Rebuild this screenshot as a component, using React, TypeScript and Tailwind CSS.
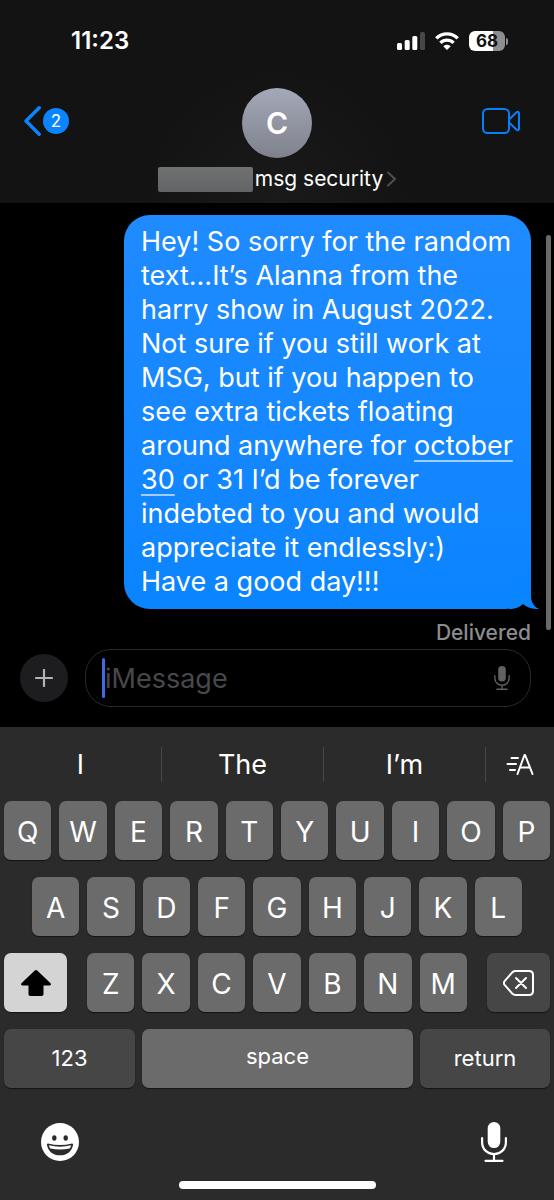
import React from "react";

const ROW_ONE = ["Q", "W", "E", "R", "T", "Y", "U", "I", "O", "P"];
const ROW_TWO = ["A", "S", "D", "F", "G", "H", "J", "K", "L"];
const ROW_THREE = ["Z", "X", "C", "V", "B", "N", "M"];

const KEY =
  "flex h-[59px] min-w-0 items-center justify-center rounded-[7px] shadow-[0_1px_1px_#151515]";

function SignalIcon() {
  return (
    <svg width="28" height="18" viewBox="0 0 28 18" fill="#fff" aria-hidden="true">
      <rect x="0" y="11" width="5" height="7" rx="1.5" />
      <rect x="7.7" y="8" width="5" height="10" rx="1.5" />
      <rect x="15.3" y="4" width="5" height="14" rx="1.5" />
      <rect x="23" y="0" width="5" height="18" rx="1.5" fill="#474747" />
    </svg>
  );
}

function WifiIcon() {
  return (
    <svg width="24" height="18" viewBox="0 0 24 18" fill="none" stroke="#fff" strokeWidth="3.4" aria-hidden="true">
      <path d="M1.3 6.4C7.3.3 16.7.3 22.7 6.4" />
      <path d="M5.400 10.900C9.200 7.200 14.800 7.200 18.600 10.900" />
      <path d="M12 18l-3.700-3.700c2.100-2 5.300-2 7.400 0z" fill="#fff" stroke="none" />
    </svg>
  );
}

function MicIcon({ className }: { className: string }) {
  return (
    <svg
      className={className}
      viewBox="0 0 26 40"
      fill="none"
      stroke="currentColor"
      strokeWidth="2.2"
      strokeLinecap="round"
      aria-hidden="true"
    >
      <rect x="6.700" y="0" width="12.600" height="26" rx="6.300" fill="currentColor" stroke="none" />
      <path d="M1.1 16v4.2C1.1 27 6.1 32 13 32s11.9-5 11.9-11.8V16M13 32v6.6M4.5 38.8h17" />
    </svg>
  );
}

function LetterKey({ letter }: { letter: string }) {
  return (
    <button type="button" className={`${KEY} flex-1 bg-[#6b6b6b] pt-[3px] text-[28px]`}>
      {letter}
    </button>
  );
}

function Header() {
  return (
    <header className="bg-[#131313] bg-[radial-gradient(circle_at_50%_100%,#1a1a1a,#131313_40%)] pb-[10px]">
      <div className="flex h-[82px] items-center justify-between pl-[71px] pr-[46px]">
        <time className="text-[24px] font-semibold leading-7">11:23</time>
        <div className="flex items-center gap-[10px]">
          <SignalIcon />
          <WifiIcon />
          <div className="flex items-center gap-px">
            <span className="flex h-5 w-9 items-center justify-center rounded-[6px] bg-[linear-gradient(90deg,#fff_68%,#8e8e8e_68%)] text-[17px] font-bold leading-5 text-[#131313]">
              68
            </span>
            <span className="h-[7px] w-[2px] rounded-r-full bg-[#8e8e8e]" />
          </div>
        </div>
      </div>
      <div className="grid grid-cols-[1fr_auto_1fr] pt-[6px]">
        <button type="button" aria-label="Back, 2 unread" className="flex h-[66px] items-center gap-[2px] justify-self-start pl-6">
          <svg width="17" height="30" viewBox="0 0 17 30" fill="none" stroke="#0a84ff" strokeWidth="3.4" strokeLinecap="round" strokeLinejoin="round" aria-hidden="true">
            <path d="M15.2 1.8 2 15l13.2 13.2" />
          </svg>
          <span className="flex size-[26px] items-center justify-center rounded-full bg-[#0a84ff] text-[17px] leading-5">2</span>
        </button>
        <button type="button" className="flex flex-col items-center gap-[7px]">
          <span className="flex size-[70px] items-center justify-center rounded-full bg-linear-to-b from-[#a4a9b9] to-[#7f828c] text-[30px] font-semibold">
            C
          </span>
          <span className="flex items-center text-[21px] leading-7">
            <span className="mr-[2px] h-[25px] w-[95px] rounded-[2px] bg-linear-to-b from-[#707171] to-[#636466]" />
            msg security
            <svg className="ml-1" width="9" height="16" viewBox="0 0 9 16" fill="none" stroke="#4e4e51" strokeWidth="2" strokeLinecap="round" strokeLinejoin="round" aria-hidden="true">
              <path d="m1 1.500 7 6.500-7 6.500" />
            </svg>
          </span>
        </button>
        <button type="button" aria-label="Video call" className="flex h-[66px] items-center justify-self-end pr-[34px]">
          <svg width="38" height="26" viewBox="0 0 38 26" fill="none" stroke="#0a7ff5" strokeWidth="2" strokeLinejoin="round" aria-hidden="true">
            <rect x="1" y="1" width="26" height="24" rx="4.500" />
            <path d="m27 11.500 7.600-7.300c1-.9 2.400-.4 2.400 1v15.600c0 1.400-1.400 1.900-2.400 1L27 14.500z" />
          </svg>
        </button>
      </div>
    </header>
  );
}

function Conversation() {
  return (
    <main className="relative flex flex-col items-end pl-[124px] pr-[23px] pt-3">
      <div className="relative w-full rounded-[26px] bg-linear-to-b from-[#1f8bff] to-[#0a84ff] px-[17px] py-[10px]">
        <p className="whitespace-nowrap text-[27px] leading-[34px]">
          Hey! So sorry for the random<br />
          text…It’s Alanna from the<br />
          harry show in August 2022.<br />
          Not sure if you still work at<br />
          MSG, but if you happen to<br />
          see extra tickets floating<br />
          around anywhere for{" "}
          <a href="#october-30" className="underline decoration-white/60 decoration-2 underline-offset-[5px]">
            october<br />30
          </a>{" "}
          or 31 I’d be forever<br />
          indebted to you and would<br />
          appreciate it endlessly:)<br />
          Have a good day!!!
        </p>
        <svg className="absolute -right-2 bottom-0" width="34" height="28" viewBox="0 0 34 28" aria-hidden="true">
          <path d="M0 28h4c6 0 11-2 14-5l4-3 12 8V28H0z" fill="#000" />
          <path d="M26 0v15c0 6 3 11 8 13-7 .3-12-1.500-16-5-3 3-8 5-14 5L0 14z" fill="#0a84ff" />
        </svg>
      </div>
      <p className="pt-[10px] text-[21px] font-medium leading-7 text-[#8c8c91]">Delivered</p>
      <span className="absolute right-[3px] top-8 h-[395px] w-[5px] rounded-full bg-[#6a6a6a]" />
    </main>
  );
}

function Composer() {
  return (
    <form className="flex items-center gap-[17px] pb-5 pl-5 pr-[23px] pt-[2px]" onSubmit={(e) => e.preventDefault()}>
      <button type="button" aria-label="Add attachment" className="flex size-12 shrink-0 items-center justify-center rounded-full bg-[#1d1d1f]">
        <svg width="18" height="18" viewBox="0 0 18 18" stroke="#b3b3b6" strokeWidth="2.200" strokeLinecap="round" aria-hidden="true">
          <path d="M9 1v16M1 9h16" />
        </svg>
      </button>
      <div className="flex h-[58px] min-w-0 flex-1 items-center rounded-[26px] border border-[#29292b] pl-4 pr-[20px]">
        <span className="h-10 w-[3px] shrink-0 rounded-full bg-[#4169e1]" />
        <input
          type="text"
          aria-label="iMessage"
          placeholder="iMessage"
          className="h-10 min-w-0 flex-1 bg-transparent pt-[2px] text-[27px] text-white outline-none placeholder:text-[#48484b]"
        />
        <button type="button" aria-label="Record audio">
          <MicIcon className="h-6 w-4 text-[#616164]" />
        </button>
      </div>
    </form>
  );
}

function Keyboard() {
  return (
    <section aria-label="Keyboard" className="flex flex-1 flex-col bg-[#2b2b2b]">
      <div className="grid h-[74px] grid-cols-[162fr_162fr_162fr_68fr] items-center text-[27px]">
        <button type="button" className="h-[35px] border-r border-[#474747] leading-[35px]">I</button>
        <button type="button" className="h-[35px] border-r border-[#474747] leading-[35px]">The</button>
        <button type="button" className="h-[35px] border-r border-[#474747] leading-[35px]">I’m</button>
        <button type="button" aria-label="Text formatting" className="flex items-center justify-center">
          <svg width="28" height="22" viewBox="0 0 28 22" fill="none" stroke="#fff" strokeWidth="2" strokeLinecap="round" strokeLinejoin="round" aria-hidden="true">
            <path d="m11.500 21 7-19h.6L26.500 21M14 14.500h10M5.500 5H12M1.500 11h8.500M4 17h5" />
          </svg>
        </button>
      </div>
      <div className="flex flex-col gap-[17px] px-1">
        <div className="flex gap-2">
          {ROW_ONE.map((l) => <LetterKey key={l} letter={l} />)}
        </div>
        <div className="flex gap-2 px-7">
          {ROW_TWO.map((l) => <LetterKey key={l} letter={l} />)}
        </div>
        <div className="flex gap-5">
          <button type="button" aria-label="Shift" className={`${KEY} w-[63px] bg-[#d4d4d4]`}>
            <svg width="30" height="26" viewBox="0 0 30 26" fill="#000" aria-hidden="true">
              <path d="M13.500.7c.9-.9 2.100-.9 3 0L29.300 13c1.300 1.200.6 2.500-.8 2.500h-6V24c0 1.300-.7 2-2 2h-11c-1.300 0-2-.7-2-2v-8.500h-6c-1.400 0-2.100-1.300-.8-2.500z" />
            </svg>
          </button>
          <div className="flex min-w-0 flex-1 gap-2">
            {ROW_THREE.map((l) => <LetterKey key={l} letter={l} />)}
          </div>
          <button type="button" aria-label="Delete" className={`${KEY} w-[63px] bg-[#464646]`}>
            <svg width="31" height="26" viewBox="0 0 31 26" fill="none" stroke="#fff" strokeWidth="2" strokeLinecap="round" strokeLinejoin="round" aria-hidden="true">
              <path d="M12.500 1H26c2.700 0 4 1.300 4 4v16c0 2.700-1.300 4-4 4H12.500c-1.300 0-2.200-.4-3-1.200l-7.700-8.600c-1.200-1.400-1.200-3 0-4.400l7.700-8.600c.8-.8 1.700-1.200 3-1.200zM13 8l10 10M23 8 13 18" />
            </svg>
          </button>
        </div>
        <div className="flex gap-[7px] text-[22px]">
          <button type="button" className={`${KEY} flex-[131] bg-[#464646]`}>123</button>
          <button type="button" className={`${KEY} flex-[271] bg-[#6b6b6b] pb-1`}>space</button>
          <button type="button" className={`${KEY} flex-[130] bg-[#464646]`}>return</button>
        </div>
      </div>
      <div className="flex items-center justify-between pl-[41px] pr-[47px] pt-[34px]">
        <button type="button" aria-label="Emoji">
          <svg width="38" height="38" viewBox="0 0 38 38" aria-hidden="true">
            <circle cx="19" cy="19" r="19" fill="#fff" />
            <ellipse cx="13.300" cy="15" rx="2.200" ry="2.700" fill="#2b2b2b" />
            <ellipse cx="24.700" cy="15" rx="2.200" ry="2.700" fill="#2b2b2b" />
            <path d="M7 20.500c8 2 16 2 24 0 1 0 1.300.8 1 1.700C30.500 28.600 26 32.300 19 32.300S7.500 28.600 6 22.200c-.3-.9 0-1.700 1-1.700z" fill="#2b2b2b" />
            <path d="M7.800 22.300c7.500 1.800 14.900 1.800 22.400 0-.4 1.500-1 2.700-1.600 3.200-6.400 1.300-12.800 1.300-19.200 0-.6-.5-1.200-1.700-1.600-3.200z" fill="#fff" />
          </svg>
        </button>
        <button type="button" aria-label="Dictate">
          <MicIcon className="h-10 w-[26px] text-white" />
        </button>
      </div>
      <div className="mx-auto mb-[11px] mt-[19px] h-2 w-[197px] rounded-full bg-white" />
    </section>
  );
}

export default function App() {
  return (
    <div className="flex min-h-screen flex-col overflow-hidden bg-black font-[Inter,'Liberation_Sans',sans-serif] text-white">
      <Header />
      <Conversation />
      <Composer />
      <Keyboard />
    </div>
  );
}
